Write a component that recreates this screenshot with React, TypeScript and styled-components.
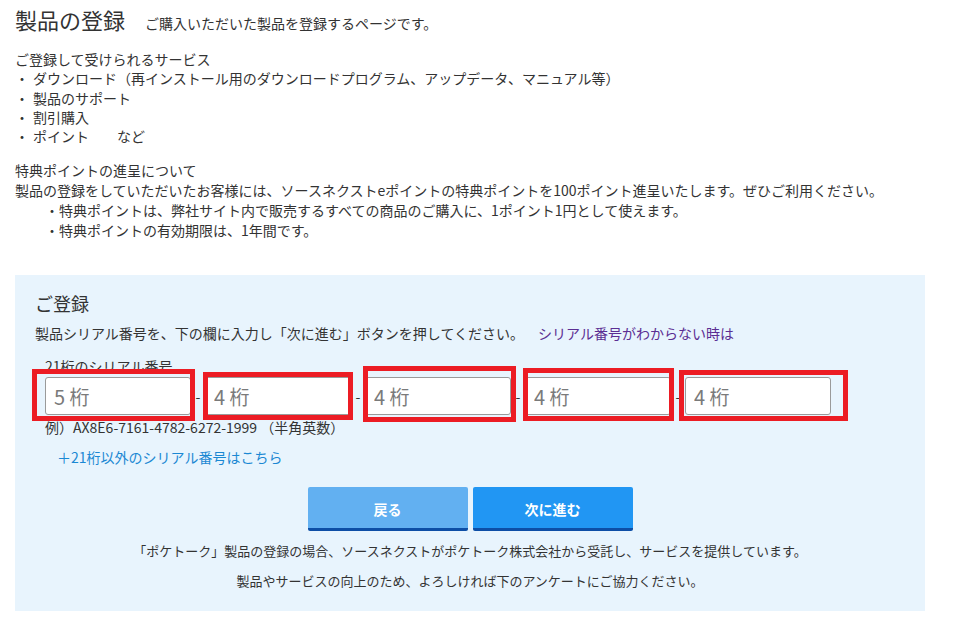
import React from "react";
import styled, { createGlobalStyle } from "styled-components";

const GlobalStyle = createGlobalStyle`
  html, body { margin: 0; padding: 0; background: #ffffff; }
  body {
    font-family: "Noto Sans CJK JP", "Noto Sans", "Liberation Sans", sans-serif;
    color: #333333;
    font-size: 14px;
    overflow: hidden;
  }
`;

const Page = styled.div`
  padding: 4px 15px 0 15px;
  width: 910px;
`;

const TitleRow = styled.div`
  display: flex;
  align-items: baseline;
  height: 30px;
`;

const Title = styled.h1`
  margin: 0;
  font-size: 22px;
  font-weight: normal;
  line-height: 30px;
  color: #333;
`;

const Lead = styled.span`
  margin-left: 20px;
  font-size: 14px;
  line-height: 30px;
`;

const Section = styled.div<{ $top: number; $lh: number }>`
  margin-top: ${(p) => p.$top}px;
  line-height: ${(p) => p.$lh}px;
  font-size: 14px;
  white-space: nowrap;
`;

const Line = styled.div<{ $indent?: number }>`
  padding-left: ${(p) => p.$indent ?? 0}px;
`;

const Bullet = styled.span`
  display: inline-block;
  width: 18px;
`;

const Panel = styled.section`
  margin-top: 35px;
  background: #e8f4fd;
  padding: 16px 20px 20px 20px;
  display: flex;
  flex-direction: column;
`;

const PanelTitle = styled.h2`
  margin: 0;
  font-size: 18px;
  font-weight: normal;
  line-height: 24px;
  color: #333;
`;

const Instruction = styled.p`
  margin: 8px 0 0 0;
  line-height: 20px;
  font-size: 14px;
  display: flex;
  gap: 14px;
`;

const Link = styled.a<{ $color: string }>`
  color: ${(p) => p.$color};
  text-decoration: none;
`;

const Label = styled.div`
  margin: 14px 0 0 10px;
  line-height: 18px;
  font-size: 14px;
`;

const SerialRow = styled.div`
  margin: 2px 0 0 10px;
  display: flex;
  align-items: center;
`;

const Field = styled.div`
  position: relative;
  width: 146px;
  height: 38px;
`;

const Input = styled.input`
  box-sizing: border-box;
  width: 100%;
  height: 100%;
  border: 1px solid #9a9a9a;
  border-radius: 3px;
  background: #fff;
  padding: 0 8px;
  font-family: "Noto Sans CJK JP", "Noto Sans", sans-serif;
  font-size: 20px;
  color: #333;
  &::placeholder { color: #7a7a7a; }
`;

const Dash = styled.span`
  width: 14px;
  text-align: center;
  font-size: 14px;
  line-height: 38px;
`;

const Marker = styled.div<{ $l: number; $r: number; $t: number; $b: number }>`
  position: absolute;
  left: ${(p) => p.$l}px;
  right: ${(p) => p.$r}px;
  top: ${(p) => p.$t}px;
  bottom: ${(p) => p.$b}px;
  border: 5px solid #ec1c24;
  pointer-events: none;
  z-index: 2;
`;

const Example = styled.div`
  margin: 3px 0 0 10px;
  line-height: 18px;
  font-size: 14px;
  position: relative;
  z-index: 1;
`;

const Extra = styled.div`
  margin: 11px 0 0 22px;
  line-height: 20px;
  font-size: 14px;
`;

const Buttons = styled.div`
  margin-top: 20px;
  display: flex;
  justify-content: center;
  gap: 5px;
`;

const Button = styled.button<{ $primary?: boolean }>`
  box-sizing: border-box;
  width: 160px;
  height: 44px;
  border: none;
  border-bottom: 3px solid #0d4ea6;
  border-radius: 2px;
  background: ${(p) => (p.$primary ? "#2196f3" : "#62b0f1")};
  color: #fff;
  font-family: "Noto Sans CJK JP", "Noto Sans", sans-serif;
  font-weight: bold;
  font-size: 14px;
  padding: 0;
  padding-top: 2px;
`;

const Note = styled.p`
  margin: 10px 0 0 0;
  text-align: center;
  line-height: 20px;
  font-size: 13px;
`;

const NextHeading = styled.h2`
  margin: 12px 0 0 112px;
  font-size: 18px;
  font-weight: normal;
  line-height: 24px;
  color: #333;
`;

const fields = [
  { ph: "5 桁", m: { l: -13, r: -4, t: -8, b: -6 } },
  { ph: "4 桁", m: { l: -2, r: -2, t: -5, b: -5 } },
  { ph: "4 桁", m: { l: -2, r: -5, t: -11, b: -7 } },
  { ph: "4 桁", m: { l: -2, r: -3, t: -9, b: -6 } },
  { ph: "4 桁", m: { l: -6, r: -17, t: -7, b: -6 } },
];

export default function App() {
  return (
    <>
      <GlobalStyle />
      <Page>
        <TitleRow>
          <Title>製品の登録</Title>
          <Lead>ご購入いただいた製品を登録するページです。</Lead>
        </TitleRow>

        <Section $top={16} $lh={19.25}>
          <Line>ご登録して受けられるサービス</Line>
          <Line><Bullet>・</Bullet>ダウンロード（再インストール用のダウンロードプログラム、アップデータ、マニュアル等）</Line>
          <Line><Bullet>・</Bullet>製品のサポート</Line>
          <Line><Bullet>・</Bullet>割引購入</Line>
          <Line><Bullet>・</Bullet>ポイント　　など</Line>
        </Section>

        <Section $top={14} $lh={20}>
          <Line>特典ポイントの進呈について</Line>
          <Line>製品の登録をしていただいたお客様には、ソースネクストeポイントの特典ポイントを100ポイント進呈いたします。ぜひご利用ください。</Line>
          <Line $indent={30}>・特典ポイントは、弊社サイト内で販売するすべての商品のご購入に、1ポイント1円として使えます。</Line>
          <Line $indent={30}>・特典ポイントの有効期限は、1年間です。</Line>
        </Section>

        <Panel>
          <PanelTitle>ご登録</PanelTitle>
          <Instruction>
            <span>製品シリアル番号を、下の欄に入力し「次に進む」ボタンを押してください。</span>
            <Link href="#" $color="#5b2e93">シリアル番号がわからない時は</Link>
          </Instruction>
          <Label>21桁のシリアル番号</Label>
          <SerialRow>
            {fields.map((f, i) => (
              <React.Fragment key={i}>
                {i > 0 && <Dash>-</Dash>}
                <Field>
                  <Input placeholder={f.ph} />
                  <Marker $l={f.m.l} $r={f.m.r} $t={f.m.t} $b={f.m.b} />
                </Field>
              </React.Fragment>
            ))}
          </SerialRow>
          <Example>例）AX8E6-7161-4782-6272-1999 （半角英数）</Example>
          <Extra>
            <Link href="#" $color="#1b88d3">＋21桁以外のシリアル番号はこちら</Link>
          </Extra>
          <Buttons>
            <Button>戻る</Button>
            <Button $primary>次に進む</Button>
          </Buttons>
          <Note>「ポケトーク」製品の登録の場合、ソースネクストがポケトーク株式会社から受託し、サービスを提供しています。</Note>
          <Note>製品やサービスの向上のため、よろしければ下のアンケートにご協力ください。</Note>
        </Panel>
        <NextHeading>アンケート</NextHeading>
      </Page>
    </>
  );
}
